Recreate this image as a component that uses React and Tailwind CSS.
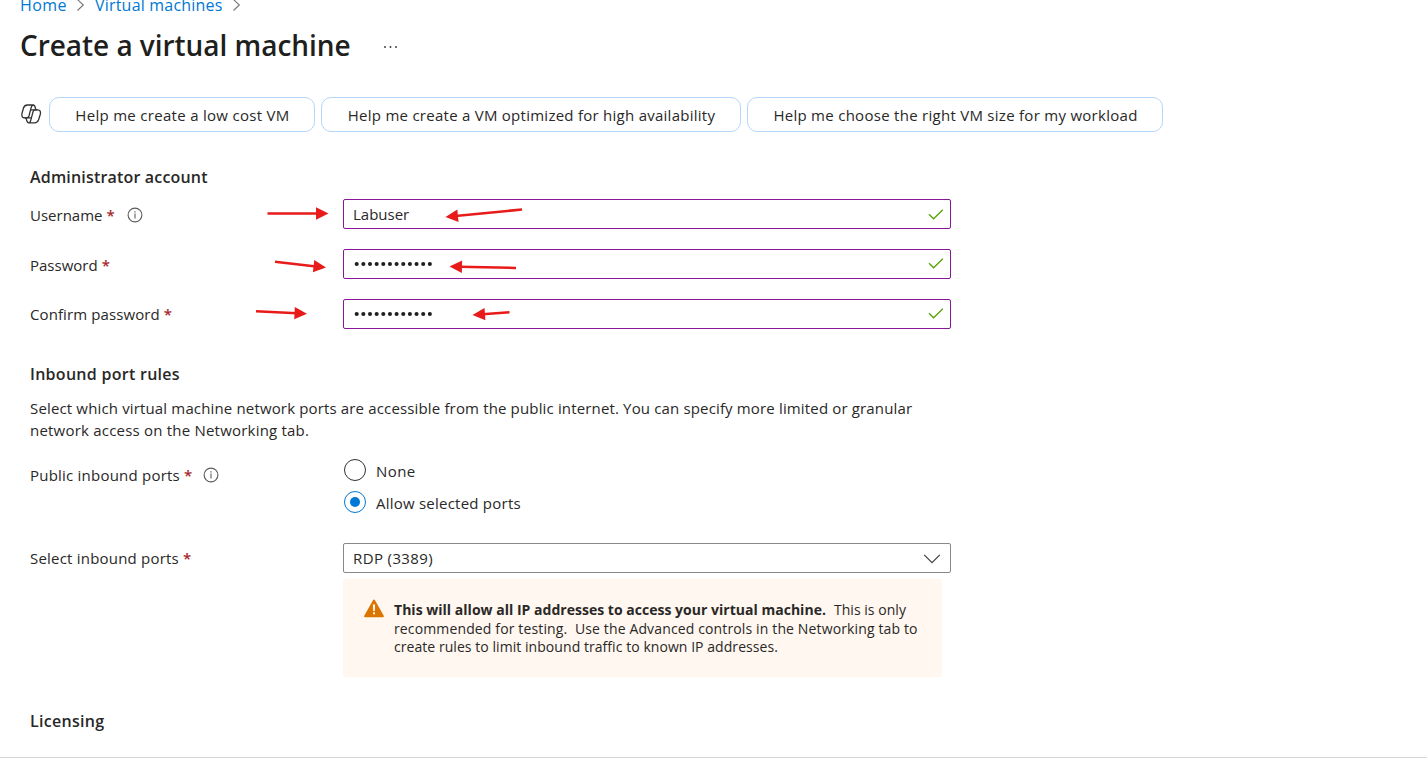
function InfoIcon() {
  return (
    <svg className="size-[16px] shrink-0" viewBox="0 0 16 16" fill="none">
      <circle cx="8" cy="8" r="6.9" stroke="#5c5b5a" strokeWidth="1.1" />
      <path d="M8 6.6V11.4" stroke="#5c5b5a" strokeWidth="1.1" />
      <path d="M8 4.3V5.6" stroke="#5c5b5a" strokeWidth="1.2" />
    </svg>
  );
}

function CopilotIcon() {
  return (
    <svg
      className="h-[20px] w-[22px] shrink-0"
      viewBox="0 0 22 20"
      fill="none"
      stroke="#323130"
      strokeWidth="1.3"
      strokeLinejoin="round"
      strokeLinecap="round"
    >
      <path d="M13.3 1H7.4C5.4 1 4.2 2 3.5 4L2 9.4C1.3 12 2.3 13.9 4.6 13.9H6.5C7.8 13.9 8.6 13.2 9 12L11.1 3.7C11.6 2 12 1 13.3 1C14.6 1 15 2.2 15.5 4.4C15.7 5.3 16 5.9 16.8 5.9" />
      <path d="M8.7 18.8H14.6C16.7 18.8 17.9 17.8 18.6 15.8L20.3 10.3C21 7.8 20.1 5.9 17.7 5.9H15.4C14.1 5.9 13.4 6.6 13 7.8L10.8 16.1C10.4 17.8 9.9 18.8 8.7 18.8C7.3 18.8 6.9 17.6 6.4 15.4C6.2 14.5 5.8 13.9 5.1 13.9" />
      <path d="M10.6 5.9H15.4M11.3 13.9H6.5" />
    </svg>
  );
}

function Crumb() {
  return (
    <svg className="h-[12px] w-[8px] shrink-0" viewBox="0 0 8 12" fill="none" stroke="#797775" strokeWidth="1.1">
      <path d="M.5 .5L6.3 6L.5 11.5" />
    </svg>
  );
}

function Required() {
  return <span className="ml-[4px] text-[15px] font-semibold text-[#a4262c]">*</span>;
}

function Check() {
  return (
    <svg className="h-[11px] w-[16px] shrink-0" viewBox="0 0 16 11" fill="none" stroke="#57a300" strokeWidth="1.3">
      <path d="M1 5.2L5.6 9.8L14.8 .8" />
    </svg>
  );
}

function Field({ label, children }) {
  return (
    <div className="flex h-[30px] items-center">
      <div className="flex w-[313px] shrink-0 items-center">{label}</div>
      <div className="flex h-[30px] w-[608px] items-center justify-between rounded-[2px] border border-[#881798] pr-[6px] pl-[10px]">
        {children}
      </div>
    </div>
  );
}

function Dots() {
  return (
    <svg className="h-[6px] w-[80px]" viewBox="0 0 80 6" fill="#201f1e">
      {[0, 1, 2, 3, 4, 5, 6, 7, 8, 9, 10, 11].map((i) => (
        <circle key={i} cx={2.7 + i * 6.65} cy="3" r="2.05" />
      ))}
    </svg>
  );
}

const arrows = [
  [267.5, 213.5, 328.5, 213.5],
  [522, 209.5, 445.5, 217],
  [275, 261.8, 326, 267.5],
  [516, 268, 449.5, 266.5],
  [256, 311.3, 307, 313.7],
  [509.5, 312.3, 472.5, 315],
];

function Arrows() {
  return (
    <svg className="pointer-events-none absolute top-0 left-0 h-[770px] w-[1427px]" viewBox="0 0 1427 770">
      {arrows.map(([x1, y1, x2, y2]) => {
        const length = Math.hypot(x2 - x1, y2 - y1);
        const angle = (Math.atan2(y2 - y1, x2 - x1) * 180) / Math.PI;
        return (
          <g key={`${x1}-${y1}`} transform={`translate(${x1} ${y1}) rotate(${angle})`} fill="#e81b1b">
            <rect x="0" y="-1.25" width={length - 10} height="2.5" />
            <path d={`M${length} 0L${length - 12.5} -6.2V6.2Z`} />
          </g>
        );
      })}
    </svg>
  );
}

const pill =
  "flex h-[35px] shrink-0 items-center justify-center rounded-[10px] border border-[#b4d6fa] pl-px";

export default function App() {
  return (
    <main className="relative h-[770px] w-[1427px] overflow-hidden bg-white font-['Open_Sans','Noto_Sans',sans-serif] text-[15px] leading-[22px] whitespace-nowrap text-[#292827]">
      <nav className="-mt-[6px] flex h-[22px] items-center pl-[20px] text-[16px] text-[#0078d4]">
        <span className="w-[57px] tracking-[0.45px]">Home</span>
        <Crumb />
        <span className="ml-[10px] w-[138px] tracking-[0.2px]">Virtual machines</span>
        <Crumb />
      </nav>

      <header className="mt-[10px] flex h-[38px] items-center pl-[20px]">
        <h1 className="w-[363px] text-[28px] leading-[38px] font-semibold tracking-[-0.04px] text-[#201f1e]">
          Create a virtual machine
        </h1>
        <svg className="mt-[4px] h-[4px] w-[16px]" viewBox="0 0 16 4" fill="#323130">
          <circle cx="2" cy="2" r=".9" />
          <circle cx="7.5" cy="2" r=".9" />
          <circle cx="13" cy="2" r=".9" />
        </svg>
      </header>

      <div className="mt-[33px] flex items-center gap-[6px] pl-[20px]">
        <div className="mr-[1px] pb-[2px]">
          <CopilotIcon />
        </div>
        <button className={`${pill} w-[266px] tracking-[0.3px]`}>Help me create a low cost VM</button>
        <button className={`${pill} w-[420px] tracking-[0.26px]`}>
          Help me create a VM optimized for high availability
        </button>
        <button className={`${pill} w-[416px] tracking-[0.28px]`}>
          Help me choose the right VM size for my workload
        </button>
      </div>

      <div className="pl-[30px]">
        <h2 className="mt-[34px] text-[16px] font-semibold tracking-[0.18px]">Administrator account</h2>

        <div className="mt-[11px] flex flex-col gap-[20px]">
          <Field
            label={
              <div className="flex items-center pt-[2px]">
                <span>Username</span>
                <Required />
                <span className="ml-[12px]">
                  <InfoIcon />
                </span>
              </div>
            }
          >
            <span className="-ml-px">Labuser</span>
            <Check />
          </Field>
          <Field
            label={
              <div className="flex items-center pt-[2px]">
                <span>Password</span>
                <Required />
              </div>
            }
          >
            <Dots />
            <span className="pb-[2px]">
              <Check />
            </span>
          </Field>
          <Field
            label={
              <div className="flex items-center">
                <span className="tracking-[0.1px]">Confirm password</span>
                <Required />
              </div>
            }
          >
            <Dots />
            <span className="pb-[2px]">
              <Check />
            </span>
          </Field>
        </div>

        <h2 className="mt-[34px] text-[16px] font-semibold tracking-[0.28px]">Inbound port rules</h2>
        <p className="mt-[12px]">
          <span className="tracking-[0.152px]">
            Select which virtual machine network ports are accessible from the public internet. You can specify more limited or granular
          </span>
          <br />
          <span className="tracking-[0.21px]">network access on the Networking tab.</span>
        </p>

        <div className="mt-[18px] flex">
          <div className="flex h-[32px] w-[313px] shrink-0 items-center">
            <span className="tracking-[0.22px]">Public inbound ports</span>
            <Required />
            <span className="ml-[11px]">
              <InfoIcon />
            </span>
          </div>
          <div className="flex flex-col gap-[10px]">
            <div className="flex h-[22px] items-center">
              <span className="ml-[1px] size-[22px] rounded-full border border-[#323130]" />
              <span className="mt-[2px] ml-[10px] tracking-[0.45px]">None</span>
            </div>
            <div className="flex h-[22px] items-center">
              <span className="ml-[1px] flex size-[22px] items-center justify-center rounded-full border border-[#0078d4]">
                <span className="size-[10px] rounded-full bg-[#0078d4]" />
              </span>
              <span className="mt-[2px] ml-[10px] tracking-[0.23px]">Allow selected ports</span>
            </div>
          </div>
        </div>

        <div className="mt-[30px] flex h-[30px] items-center">
          <div className="flex w-[313px] shrink-0 items-center">
            <span className="tracking-[0.21px]">Select inbound ports</span>
            <Required />
          </div>
          <div className="flex h-[30px] w-[608px] items-center justify-between rounded-[2px] border border-[#8a8886] pr-[9px] pl-[9px]">
            <span className="tracking-[0.38px]">RDP (3389)</span>
            <svg className="mt-[2px] h-[10px] w-[18px]" viewBox="0 0 18 10" fill="none" stroke="#484644" strokeWidth="1.3">
              <path d="M1.2 .9L9 8.7L16.8 .9" />
            </svg>
          </div>
        </div>

        <div className="mt-[6px] ml-[313px] flex h-[98px] w-[599px] rounded-[2px] bg-[#fff7f0] pt-[21px] pl-[20px] text-[14px] leading-[18.5px]">
          <svg className="-mt-px mr-[9px] h-[19px] w-[22px] shrink-0" viewBox="0 0 22 19">
            <path
              d="M11 1.6L19.9 17.2H2.1Z"
              fill="#db7500"
              stroke="#db7500"
              strokeWidth="2"
              strokeLinejoin="round"
            />
            <path d="M9.9 5.6H12.1L11.8 12H10.2Z" fill="#fff" />
            <rect x="10" y="13.3" width="2" height="2" fill="#fff" />
          </svg>
          <p className="mt-px">
            <strong className="font-bold tracking-[0.02px]">
              This will allow all IP addresses to access your virtual machine.
            </strong>
            <span className="ml-[8px] tracking-[0.04px]">This is only</span>
            <br />
            <span className="tracking-[0.135px]">
              recommended for testing.&nbsp; Use the Advanced controls in the Networking tab to
            </span>
            <br />
            <span className="tracking-[0.055px]">create rules to limit inbound traffic to known IP addresses.</span>
          </p>
        </div>

        <h2 className="mt-[33px] text-[16px] font-semibold tracking-[0.28px]">Licensing</h2>
      </div>

      <div className="mt-[25px] h-px bg-[#d9d8d7]" />
      <Arrows />
    </main>
  );
}
